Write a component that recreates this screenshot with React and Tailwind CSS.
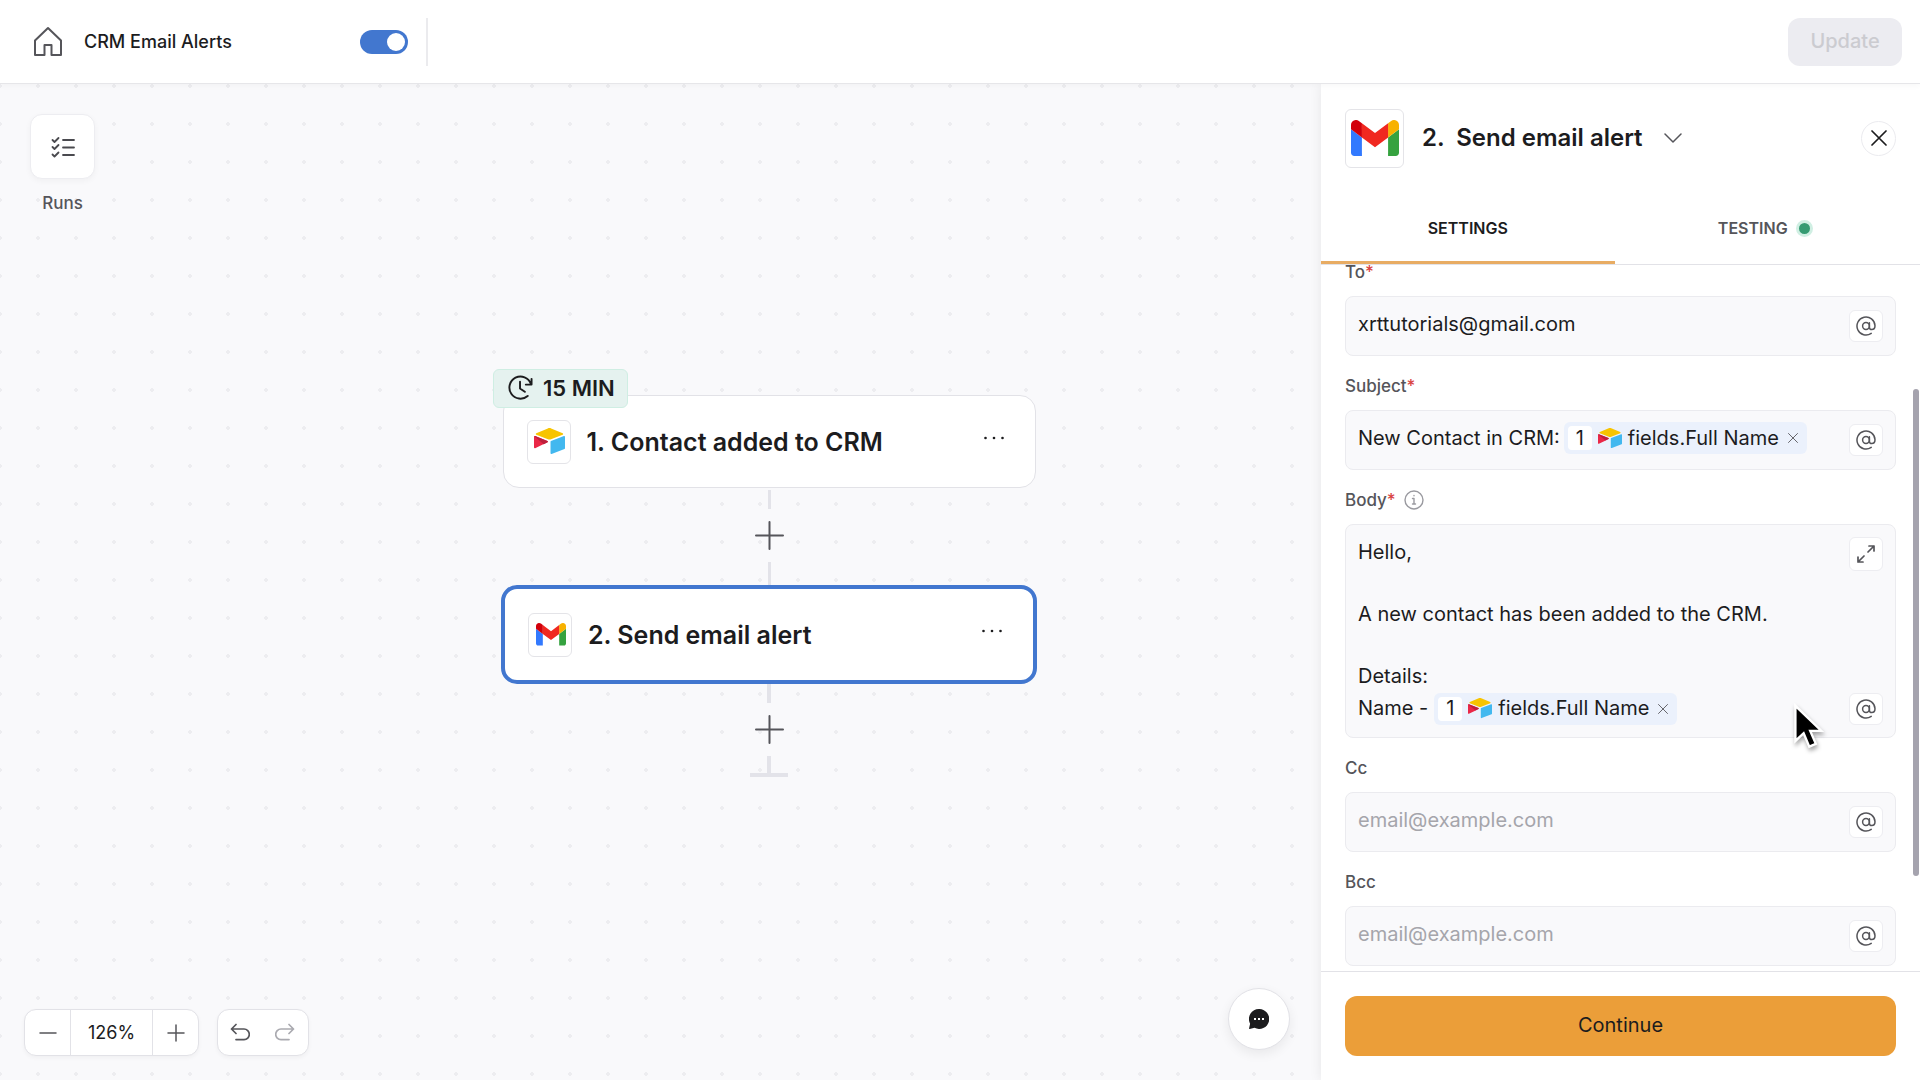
import React from "react";

function GmailLogo({ className }) {
  return (
    <svg viewBox="52 42 88 66" className={className} aria-hidden="true">
      <path fill="#3279fe" d="M58 108h14V74L52 59v43c0 3.32 2.69 6 6 6" />
      <path fill="#35a23f" d="M120 108h14c3.32 0 6-2.69 6-6V59l-20 15" />
      <path fill="#f8b100" d="M120 48v26l20-15v-8c0-7.42-8.47-11.65-14.4-7.2" />
      <path fill="#f02820" d="M72 74V48l24 18 24-18v26L96 92" />
      <path fill="#d2000a" d="M52 51v8l20 15V48l-5.6-4.2c-5.94-4.45-14.4-.22-14.4 7.2" />
    </svg>
  );
}

function AirtableLogo({ className }) {
  return (
    <svg viewBox="11 10 177 149" className={className} aria-hidden="true">
      <path fill="#f7c400" d="M90.04 12.37 24.08 39.66c-3.67 1.52-3.63 6.73.06 8.19l66.24 26.27c5.82 2.31 12.3 2.31 18.12 0l66.23-26.27c3.69-1.46 3.73-6.67.06-8.19l-65.96-27.29c-6.01-2.49-12.77-2.49-18.79 0" />
      <path fill="#42b8ef" d="M105.31 88.46v65.62c0 3.12 3.15 5.26 6.05 4.1l73.81-28.64a4.42 4.42 0 0 0 2.79-4.11V59.81c0-3.12-3.15-5.25-6.05-4.1L108.1 84.35a4.42 4.42 0 0 0-2.79 4.11" />
      <path fill="#ea2747" d="m88.08 91.85-21.9 10.57-2.23 1.08-46.24 22.15c-2.93 1.42-6.67-.72-6.67-3.98V60.09c0-1.18.6-2.2 1.41-2.96.34-.34.72-.62 1.12-.84 1.1-.67 2.68-.84 4.02-.31l70.12 27.78c3.56 1.41 3.84 6.41.37 8.09" />
      <path fill="#bd1f3c" d="m88.08 91.85-21.9 10.57-53.73-45.29c.34-.34.72-.62 1.12-.84 1.1-.67 2.68-.84 4.02-.31l70.12 27.78c3.56 1.41 3.84 6.41.37 8.09" />
    </svg>
  );
}

function Stroke({ className, box = "0 0 24 24", width = 2, children }) {
  return (
    <svg viewBox={box} className={className} fill="none" stroke="currentColor" strokeWidth={width} strokeLinecap="round" strokeLinejoin="round" aria-hidden="true">
      {children}
    </svg>
  );
}

function AtButton() {
  return (
    <button type="button" aria-label="Insert variable" className="flex h-8 w-[34px] shrink-0 items-center justify-center rounded-md border border-[#ededf1] bg-white text-[#55555a]">
      <Stroke className="size-5" box="0 0 20 20" width={1.5}>
        <circle cx="10" cy="10" r="3.4" />
        <path d="M13.4 6.8v4.4c0 1.5.9 2.4 2.3 2.4 1.8 0 3.3-1.5 3.3-3.8A9 9 0 1 0 15.2 17.4" />
      </Stroke>
    </button>
  );
}

function Chip() {
  return (
    <span contentEditable={false} className="inline-flex h-8 items-center rounded-md bg-[#ebf1fc] px-1 align-middle">
      <span className="mr-1.5 flex size-6 items-center justify-center rounded-sm bg-white">1</span>
      <AirtableLogo className="mr-1.5 w-6" />
      fields.Full Name
      <button type="button" aria-label="Remove variable" className="ml-1 flex size-5 items-center justify-center text-[#66666c]">
        <Stroke className="size-2.5" box="0 0 10 10" width={1}>
          <path d="M.5.5l9 9M9.5.5l-9 9" />
        </Stroke>
      </button>
    </span>
  );
}

function Label({ id, htmlFor, required, children }) {
  return (
    <label id={id} htmlFor={htmlFor} className="text-[17px] leading-4 font-medium text-[#55555a]">
      {children}
      {required && <span className="text-[#d94444]">*</span>}
    </label>
  );
}

function Field({ id, label, required, children, ...input }) {
  return (
    <div className="flex flex-col gap-4">
      <Label id={`${id}-label`} htmlFor={children ? undefined : id} required={required}>{label}</Label>
      <div className="flex h-[60px] items-center rounded-lg border border-[#ebebef] bg-[#f9f9fb] px-3">
        <div className="min-w-0 flex-1 pb-1">
          {children ? (
            <div id={id} role="textbox" aria-labelledby={`${id}-label`} contentEditable suppressContentEditableWarning className="flex h-8 items-center gap-1 whitespace-nowrap outline-none">
              {children}
            </div>
          ) : (
            <input id={id} className="h-8 w-full bg-transparent outline-none placeholder:text-[#a5a5ab]" {...input} />
          )}
        </div>
        <AtButton />
      </div>
    </div>
  );
}

function NodeCard({ logo, title, selected }) {
  return (
    <div className={selected ? "flex h-[99px] w-full items-center rounded-2xl border-4 border-[#4277cf] bg-white px-[23px]" : "flex h-[93px] w-[533px] items-center rounded-2xl border border-[#e2e2e7] bg-white px-[23px]"}>
      <span className="flex size-11 items-center justify-center rounded-md border border-[#e4e4e8] bg-white pl-0.5">{logo}</span>
      <h2 className="ml-4 flex-1 text-[25px] leading-8 font-semibold whitespace-pre">{title}</h2>
      <button type="button" aria-label="More options" className="mr-0.5 mb-2 flex h-6 w-8 items-center justify-center">
        <svg viewBox="0 0 20 4" className="w-5" fill="#1c1c1e" aria-hidden="true">
          <circle cx="1.5" cy="2" r="1.3" />
          <circle cx="10" cy="2" r="1.3" />
          <circle cx="18.5" cy="2" r="1.3" />
        </svg>
      </button>
    </div>
  );
}

function AddStep() {
  return (
    <button type="button" aria-label="Add step" className="my-3 flex size-[29px] items-center justify-center text-[#55555a]">
      <Stroke className="size-full" box="0 0 29 29" width={2}>
        <path d="M14.5 1v27M1 14.5h27" />
      </Stroke>
    </button>
  );
}

function Header() {
  return (
    <header className="relative z-10 flex h-[84px] shrink-0 items-center border-b border-[#e6e6e9] bg-white pt-px pr-[18px] pl-8 shadow-[0_2px_6px_rgba(0,0,0,0.03)]">
      <a href="#home" aria-label="Home" className="text-[#55555a]">
        <Stroke className="size-8" box="0 0 32 32" width={2}>
          <path d="M3 14.5 16 2l13 12.5V29h-9.5V19h-7v10H3z" />
        </Stroke>
      </a>
      <h1 className="ml-5 w-[276px] text-lg font-medium">CRM Email Alerts</h1>
      <input type="checkbox" role="switch" defaultChecked aria-label="Flow enabled" className="relative h-6 w-12 appearance-none rounded-full bg-[#4277cf] after:absolute after:top-[3px] after:right-[3px] after:size-[18px] after:rounded-full after:bg-white after:content-['']" />
      <span className="ml-[18px] h-12 w-0.5 bg-[#ebebee]" />
      <button type="button" disabled className="ml-auto h-12 w-[114px] rounded-xl bg-[#ececf1] pb-0.5 text-xl font-medium text-[#cbcbd0]">Update</button>
    </header>
  );
}

function Canvas() {
  return (
    <main className="relative min-w-0 flex-1 overflow-hidden bg-[#f9f9fb] bg-[radial-gradient(circle,#ededf0_2px,transparent_2px)] bg-[length:38px_38px] bg-[position:-19px_-17px]">
      <div className="absolute top-[30px] left-[30px] flex flex-col items-center gap-4">
        <button type="button" aria-labelledby="runs-label" className="flex size-[65px] items-center justify-center rounded-xl border border-[#ededf1] bg-white text-[#4a4a4f] shadow-[0_2px_6px_rgba(0,0,0,0.04)]">
          <Stroke className="h-[22px] w-6" box="0 0 24 22" width={1.8}>
            <path d="M1.5 4 3.5 6 7.5 2M1.5 11l2 2 4-4M1.5 18.5l2 2 4-4M12 4h11M12 11.5h11M12 19h11" />
          </Stroke>
        </button>
        <span id="runs-label" className="text-[17px] leading-4 font-medium text-[#55555a]">Runs</span>
      </div>

      <div className="absolute top-[311px] left-[501px] flex w-[536px] flex-col items-center">
        <div className="absolute -top-[26px] -left-2 flex h-[39px] w-[135px] items-center gap-2.5 rounded-md border border-[#cfeee3] bg-[#e5f2ef] pb-0.5 pl-[14px]">
          <Stroke className="size-[25px]" box="0 0 26 26" width={2}>
            <path d="M24.5 4v6h-6M23.8 9.2A11.5 11.5 0 1 0 20.5 21.8M12.5 7v7l5 3.5" />
          </Stroke>
          <span className="text-[22px] leading-7 font-semibold">15 MIN</span>
        </div>
        <NodeCard logo={<AirtableLogo className="w-[31px]" />} title="1. Contact added to CRM" />
        <span className="mt-0.5 h-[19px] w-[3px] bg-[#e3e3e9]" />
        <AddStep />
        <span className="h-[23px] w-[3px] bg-[#e3e3e9]" />
        <NodeCard selected logo={<GmailLogo className="w-[30px]" />} title="2. Send email alert" />
        <span className="h-[19px] w-1 bg-[#e3e3e9]" />
        <AddStep />
        <span className="h-[17px] w-1 bg-[#e3e3e9]" />
        <span className="h-1 w-[38px] bg-[#e3e3e9]" />
      </div>

      <div className="absolute bottom-6 left-6 flex gap-[18px]">
        <div className="flex h-[47px] overflow-hidden rounded-xl border border-[#e2e2e7] bg-white text-[#55555a] shadow-[0_2px_4px_rgba(0,0,0,0.04)]">
          <button type="button" aria-label="Zoom out" className="flex w-[45px] items-center justify-center">
            <Stroke className="size-[18px]" box="0 0 18 18" width={1.5}><path d="M1 9h16" /></Stroke>
          </button>
          <span className="flex w-[83px] items-center justify-center border-x border-[#e2e2e7] text-lg text-[#1c1c1e]">126%</span>
          <button type="button" aria-label="Zoom in" className="flex w-[45px] items-center justify-center">
            <Stroke className="size-[18px]" box="0 0 18 18" width={1.5}><path d="M1 9h16M9 1v16" /></Stroke>
          </button>
        </div>
        <div className="flex h-[47px] rounded-xl border border-[#e2e2e7] bg-white pr-0.5 shadow-[0_2px_4px_rgba(0,0,0,0.04)]">
          <button type="button" aria-label="Undo" className="flex w-11 items-center justify-center text-[#55555a]">
            <Stroke className="size-5" box="0 0 20 20" width={1.7}><path d="M6 1.5 1.5 6 6 10.5M1.5 6H14a5.3 5.3 0 0 1 0 10.6H6" /></Stroke>
          </button>
          <button type="button" aria-label="Redo" className="flex w-11 items-center justify-center pl-0.5 text-[#aaaab0]">
            <Stroke className="size-5" box="0 0 20 20" width={1.7}><path d="M14 1.5 18.5 6 14 10.5M18.5 6H6a5.3 5.3 0 0 0 0 10.6h8" /></Stroke>
          </button>
        </div>
      </div>

      <button type="button" aria-label="Open chat" className="absolute right-[31px] bottom-[30px] flex size-[62px] items-center justify-center rounded-full border border-[#e2e2e7] bg-white shadow-[0_4px_12px_rgba(0,0,0,0.07)]">
        <svg viewBox="0 0 20 20" className="size-5" aria-hidden="true">
          <path fill="#1c1c1e" d="M10 0a10 10 0 1 1-4.5 18.8L.8 20a.6.6 0 0 1-.7-.8l1-4.5A10 10 0 0 1 10 0z" />
          <path fill="#fff" d="M5 9h2v2H5zM9 9h2v2H9zM13 9h2v2h-2z" />
        </svg>
      </button>
    </main>
  );
}

function Panel() {
  return (
    <aside className="relative flex w-[599px] shrink-0 flex-col bg-white shadow-[0_0_12px_rgba(0,0,0,0.08)]">
      <div className="flex h-28 shrink-0 items-center px-6 pb-1">
        <span className="flex size-[59px] items-center justify-center rounded-md border border-[#e4e4e8]"><GmailLogo className="w-12" /></span>
        <h2 className="ml-[18px] text-2xl leading-8 font-semibold whitespace-pre">2.  Send email alert</h2>
        <button type="button" aria-label="Switch step" className="ml-3.5 flex size-8 items-center justify-center text-[#55555a]">
          <Stroke className="h-2.5 w-[18px]" box="0 0 18 10" width={1.5}><path d="M1 1l8 8 8-8" /></Stroke>
        </button>
        <button type="button" aria-label="Close" className="ml-auto flex size-[35px] items-center justify-center rounded-full border border-[#ebebef]">
          <Stroke className="size-4" box="0 0 16 16" width={1.7}><path d="M1 1l14 14M15 1 1 15" /></Stroke>
        </button>
      </div>
      <div role="tablist" className="z-10 -mb-px flex h-[69px] shrink-0 border-b border-[#e2e2e7] pr-3 text-base font-semibold">
        <button type="button" role="tab" aria-selected="true" className="flex w-1/2 items-center justify-center border-b-3 border-[#e8ac63] pb-px">SETTINGS</button>
        <button type="button" role="tab" aria-selected="false" className="flex w-1/2 items-center justify-center gap-2 border-b-3 border-transparent pb-px pl-2 text-[#55555a]">
          TESTING
          <span className="size-[17px] rounded-full border-3 border-[#d0efe3] bg-[#369b72]" />
        </button>
      </div>

      <div className="relative min-h-0 flex-1 overflow-hidden">
        <form className="flex flex-col gap-[22px] px-6 text-xl">
          <Field id="to" label="To" required defaultValue="xrttutorials@gmail.com" />
          <Field id="subject" label="Subject" required>
            <span>New Contact in CRM:</span><Chip />
          </Field>
          <div className="flex flex-col gap-4">
            <div className="flex h-4 items-center gap-2">
              <Label id="body-label" required>Body</Label>
              <button type="button" aria-label="About the body" className="text-[#9a9aa0]">
                <Stroke className="size-5" box="0 0 20 20" width={1.4}>
                  <circle cx="10" cy="10" r="9" />
                  <path d="M8.5 8.5H10V14M8.5 14h3M10 5.5v.3" />
                </Stroke>
              </button>
            </div>
            <div className="flex rounded-lg border border-[#ebebef] bg-[#f9f9fb] p-3">
              <div role="textbox" aria-multiline="true" aria-labelledby="body-label" contentEditable suppressContentEditableWarning className="min-w-0 flex-1 leading-[31px] outline-none">
                <p>Hello,</p>
                <p><br /></p>
                <p>A new contact has been added to the CRM.</p>
                <p><br /></p>
                <p>Details:</p>
                <p className="flex h-[33px] items-center gap-1.5"><span>Name -</span><Chip /></p>
              </div>
              <div className="flex flex-col justify-between">
                <button type="button" aria-label="Expand editor" className="flex size-[34px] items-center justify-center rounded-md border border-[#ededf1] bg-white text-[#55555a]">
                  <Stroke className="size-[18px]" box="0 0 18 18" width={1.7}>
                    <path d="M12 1h5v5M17 1l-6 6M6 17H1v-5M1 17l6-6" />
                  </Stroke>
                </button>
                <AtButton />
              </div>
            </div>
          </div>
          <Field id="cc" label="Cc" placeholder="email@example.com" />
          <Field id="bcc" label="Bcc" placeholder="email@example.com" />
        </form>
        <span className="absolute top-[125px] right-px h-[487px] w-1.5 rounded-full bg-[#a5a3ae]" />
        <svg viewBox="0 0 32 50" className="absolute top-[439px] right-[96px] w-[30px] drop-shadow-[1px_3px_2px_rgba(0,0,0,0.35)]" aria-hidden="true">
          <path d="M1.5 3v37.5l8.8-8.3 6 14.3 7-3-6-13.8h12z" fill="#000" stroke="#fff" strokeWidth="2.5" />
        </svg>
      </div>

      <div className="shrink-0 border-t border-[#e2e2e7] px-6 py-6">
        <button type="button" className="h-[60px] w-full rounded-xl bg-[#eb9e39] pb-0.5 text-xl">Continue</button>
      </div>
    </aside>
  );
}

export default function App() {
  return (
    <div className="flex h-screen flex-col overflow-hidden bg-white font-['Inter',sans-serif] text-[#1c1c1e]">
      <Header />
      <div className="flex min-h-0 flex-1">
        <Canvas />
        <Panel />
      </div>
    </div>
  );
}
